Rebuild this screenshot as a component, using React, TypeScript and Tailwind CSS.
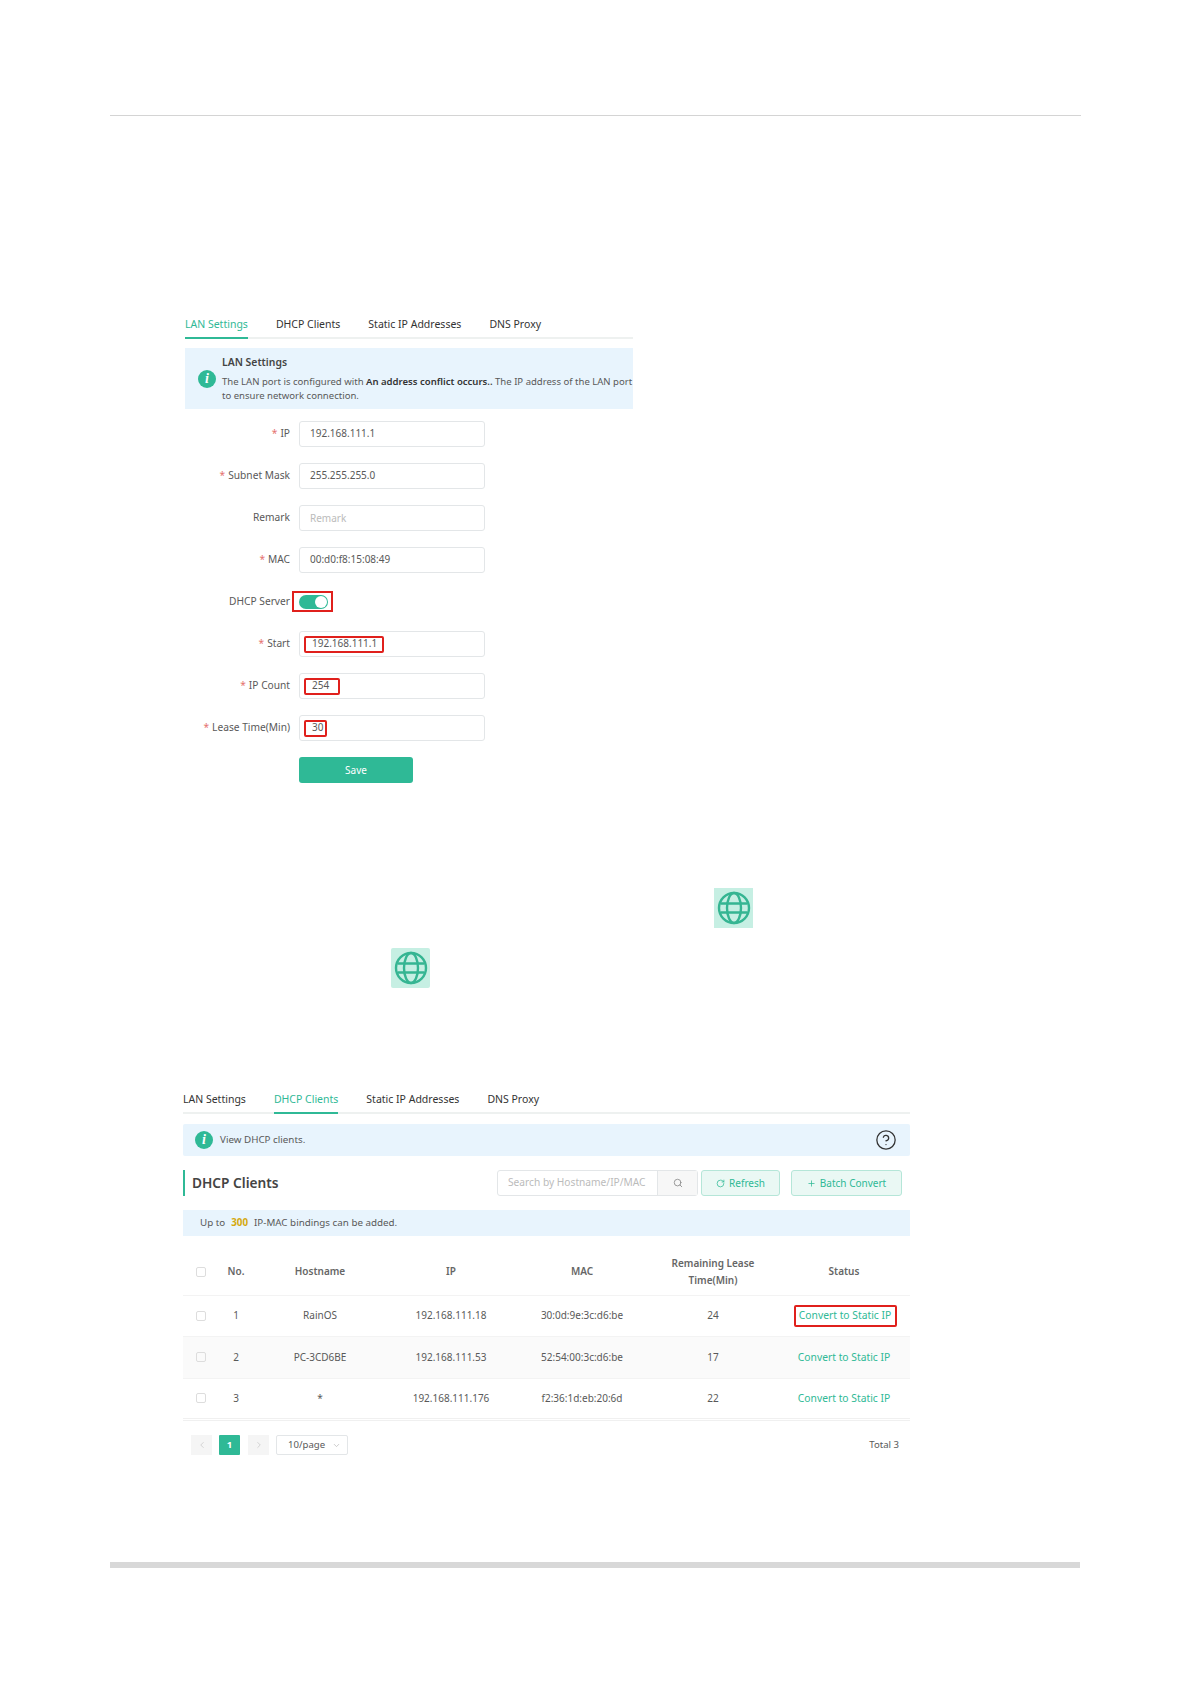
import React from 'react'
import { ChevronDown, ChevronLeft, ChevronRight, CircleHelp, Plus, RotateCw, Search } from 'lucide-react'

const font = { fontFamily: '"Noto Sans", "Open Sans", sans-serif' }

const clients = [
  { no: 1, host: 'RainOS', ip: '192.168.111.18', mac: '30:0d:9e:3c:d6:be', lease: 24, marked: true },
  { no: 2, host: 'PC-3CD6BE', ip: '192.168.111.53', mac: '52:54:00:3c:d6:be', lease: 17, marked: false },
  { no: 3, host: '*', ip: '192.168.111.176', mac: 'f2:36:1d:eb:20:6d', lease: 22, marked: false },
]

function Tabs({ active }: { active: number }) {
  const labels = ['LAN Settings', 'DHCP Clients', 'Static IP Addresses', 'DNS Proxy']
  return (
    <div className="flex gap-[28px] border-b-2 border-[#eef1f0] h-[28px]">
      {labels.map((label, i) => (
        <div
          key={label}
          className={
            i === active
              ? 'h-[28px] leading-[26px] text-[10.5px] text-[#2fb996] border-b-2 border-[#2fb996]'
              : 'h-[28px] leading-[26px] text-[10.5px] text-[#333]'
          }
        >
          {label}
        </div>
      ))}
    </div>
  )
}

function InfoIcon() {
  return (
    <div className="w-[18px] h-[18px] rounded-full bg-[#2fb996] flex items-center justify-center shrink-0">
      <span className="text-white text-[14px] font-bold italic leading-none font-['Liberation_Serif',serif]">i</span>
    </div>
  )
}

function Globe({ className }: { className: string }) {
  return (
    <div className={`w-[39px] h-[40px] bg-[#c6efe3] flex items-center justify-center ${className}`}>
      <svg width="34" height="34" viewBox="0 0 34 34" fill="none" stroke="#35b592" strokeWidth="2.4">
        <circle cx="17" cy="17" r="15" />
        <ellipse cx="17" cy="17" rx="7" ry="15" />
        <path d="M3.5 12.5h27M3.5 21.5h27" />
      </svg>
    </div>
  )
}

function Field({ label, required = true, children }: { label: string; required?: boolean; children: React.ReactNode }) {
  return (
    <div className="flex items-center h-[26px] gap-[9px]">
      <div className="w-[105px] pb-[1px] text-right text-[10.2px] text-[#595959] whitespace-nowrap">
        {required && <span className="text-[#e5736f] mr-[3px]">*</span>}
        {label}
      </div>
      {children}
    </div>
  )
}

function Input({ value, placeholder, mark }: { value?: string; placeholder?: string; mark?: string }) {
  return (
    <div className="w-[186px] h-[26px] border border-[#e3e6e8] rounded-[3px] flex items-center text-[10px] text-[#595959]">
      {placeholder ? (
        <span className="pl-[10px] text-[#bbb]">{placeholder}</span>
      ) : mark ? (
        <span className={`ml-[4px] h-[17px] pl-[6px] pb-[1px] flex items-center border-2 border-[#e0201c] rounded-[2px] ${mark}`}>
          {value}
        </span>
      ) : (
        <span className="pl-[10px] pb-[1px]">{value}</span>
      )}
    </div>
  )
}

export default function App() {
  return (
    <div className="bg-white min-h-[1684px] px-[110px] pt-[115px] pb-[116px] text-[#595959]" style={font}>
      <div className="w-[971px] h-px bg-[#d4d4d4]" />

      {/* LAN settings screenshot */}
      <div className="ml-[75px] mt-[195px] w-[448px]">
        <Tabs active={0} />
        <div className="mt-[9px] h-[61px] bg-[#e8f4fd] flex items-center overflow-hidden pl-[13px] gap-[6px]">
          <InfoIcon />
          <div className="whitespace-nowrap text-[9.55px] leading-[14px]">
            <div className="text-[10.4px] font-semibold text-[#444] mb-[6px]">LAN Settings</div>
            <div>
              The LAN port is configured with <span className="font-semibold text-[#333]">An address conflict occurs..</span> The IP address of the LAN port
            </div>
            <div>to ensure network connection.</div>
          </div>
        </div>
        <div className="mt-[12px] flex flex-col gap-4">
          <Field label="IP"><Input value="192.168.111.1" /></Field>
          <Field label="Subnet Mask"><Input value="255.255.255.0" /></Field>
          <Field label="Remark" required={false}><Input placeholder="Remark" /></Field>
          <Field label="MAC"><Input value="00:d0:f8:15:08:49" /></Field>
          <Field label="DHCP Server" required={false}>
            <div className="relative w-[29px] h-[14px] rounded-full bg-[#2fb996]">
              <div className="absolute right-px top-px w-[12px] h-[12px] rounded-full bg-white" />
              <div className="absolute -left-[7px] -top-[4px] w-[41px] h-[21px] border-2 border-[#e0201c]" />
            </div>
          </Field>
          <Field label="Start"><Input value="192.168.111.1" mark="w-[80px]" /></Field>
          <Field label="IP Count"><Input value="254" mark="w-[36px]" /></Field>
          <Field label="Lease Time(Min)"><Input value="30" mark="w-[23px]" /></Field>
          <div className="ml-[114px] w-[114px] h-[26px] rounded-[3px] bg-[#2fb996] text-white text-[10px] flex items-center justify-center">
            Save
          </div>
        </div>
      </div>

      <Globe className="ml-[604px] mt-[105px]" />
      <Globe className="ml-[281px] mt-[20px] rounded-[2px]" />

      {/* DHCP clients screenshot */}
      <div className="ml-[73px] mt-[98px] w-[727px]">
        <Tabs active={1} />
        <div className="mt-[10px] h-[32px] bg-[#e8f4fd] rounded-[2px] flex items-center pl-[12px] pr-[13px] gap-[7px] text-[9.8px]">
          <InfoIcon />
          <span className="flex-1">View DHCP clients.</span>
          <CircleHelp size={22} strokeWidth={1.4} className="text-[#333]" />
        </div>

        <div className="mt-[14px] flex items-center h-[26px]">
          <div className="h-[26px] border-l-2 border-[#2fb996] pl-[7px] text-[13.7px] font-semibold leading-[26px] text-[#444]">
            DHCP Clients
          </div>
          <div className="ml-auto flex items-center mr-[8px]">
            <div className="w-[201px] h-[26px] border border-[#e3e6e8] rounded-[3px] flex items-center text-[10.2px] text-[#bbb]">
              <span className="w-[159px] pl-[10px] overflow-hidden whitespace-nowrap">Search by Hostname/IP/MAC</span>
              <div className="flex-1 h-full bg-[#f7f7f7] border-l border-[#e3e6e8] flex items-center justify-center">
                <Search size={10} className="text-[#888]" />
              </div>
            </div>
            <div className="ml-[3px] w-[79px] h-[26px] border border-[#b5e6d8] bg-[#eaf8f4] rounded-[3px] text-[#2fb996] text-[10px] flex items-center justify-center gap-[4px]">
              <RotateCw size={9} />
              Refresh
            </div>
            <div className="ml-[11px] w-[111px] h-[26px] border border-[#b5e6d8] bg-[#eaf8f4] rounded-[3px] text-[#2fb996] text-[10px] flex items-center justify-center gap-[4px]">
              <Plus size={9} />
              Batch Convert
            </div>
          </div>
        </div>

        <div className="mt-[14px] h-[26px] bg-[#e8f4fd] flex items-center pl-[17px] text-[9.8px]">
          Up to <b className="text-[#d4a80f] mx-[6px]">300</b> IP-MAC bindings can be added.
        </div>

        <table className="mt-[13px] w-full table-fixed text-[10px] text-center border-b-3 border-double border-[#f0f0f0]">
          <colgroup>
            <col className="w-[35px]" />
            <col className="w-[36px]" />
            <col className="w-[132px]" />
            <col className="w-[130px]" />
            <col className="w-[132px]" />
            <col className="w-[130px]" />
            <col />
          </colgroup>
          <thead>
            <tr className="h-[46px] border-b border-[#f3f3f3] text-[#666] font-semibold leading-[17px]">
              <th><div className="w-[10px] h-[10px] mx-auto border border-[#ddd] rounded-[2px]" /></th>
              <th className="font-semibold">No.</th>
              <th className="font-semibold">Hostname</th>
              <th className="font-semibold">IP</th>
              <th className="font-semibold">MAC</th>
              <th className="font-semibold">Remaining Lease<br />Time(Min)</th>
              <th className="font-semibold">Status</th>
            </tr>
          </thead>
          <tbody>
            {clients.map((c) => (
              <tr key={c.no} className={c.no === 2 ? 'h-[41.5px] bg-[#fafafa] border-b border-[#f3f3f3]' : 'h-[41.5px] border-b border-[#f3f3f3]'}>
                <td><div className="w-[10px] h-[10px] mx-auto border border-[#ddd] rounded-[2px]" /></td>
                <td>{c.no}</td>
                <td>{c.host}</td>
                <td>{c.ip}</td>
                <td>{c.mac}</td>
                <td>{c.lease}</td>
                <td className="text-[#2fb996] text-[10.3px]">
                  {c.marked ? (
                    <span className="inline-flex items-center justify-center ml-[2px] w-[103px] h-[22px] border-2 border-[#e0201c] rounded-[2px]">
                      Convert to Static IP
                    </span>
                  ) : (
                    'Convert to Static IP'
                  )}
                </td>
              </tr>
            ))}
          </tbody>
        </table>

        <div className="mt-[14px] flex items-center h-[20px] pl-[8px] pr-[11px] text-[9.6px]">
          <div className="w-[21px] h-[20px] bg-[#f5f5f5] flex items-center justify-center">
            <ChevronLeft size={10} className="text-[#ccc]" />
          </div>
          <div className="ml-[7px] w-[21px] h-[20px] bg-[#2fb996] text-white font-bold flex items-center justify-center rounded-[1px]">1</div>
          <div className="ml-[8px] w-[21px] h-[20px] bg-[#f5f5f5] flex items-center justify-center">
            <ChevronRight size={10} className="text-[#ccc]" />
          </div>
          <div className="ml-[7px] w-[72px] h-[20px] border border-[#e3e6e8] rounded-[2px] flex items-center justify-between pl-[11px] pr-[6px]">
            10/page
            <ChevronDown size={9} className="text-[#bbb]" />
          </div>
          <span className="ml-auto">Total 3</span>
        </div>
      </div>

      <div className="mt-[107px] w-[970px] h-[6px] bg-[#d8d8d8]" />
    </div>
  )
}
